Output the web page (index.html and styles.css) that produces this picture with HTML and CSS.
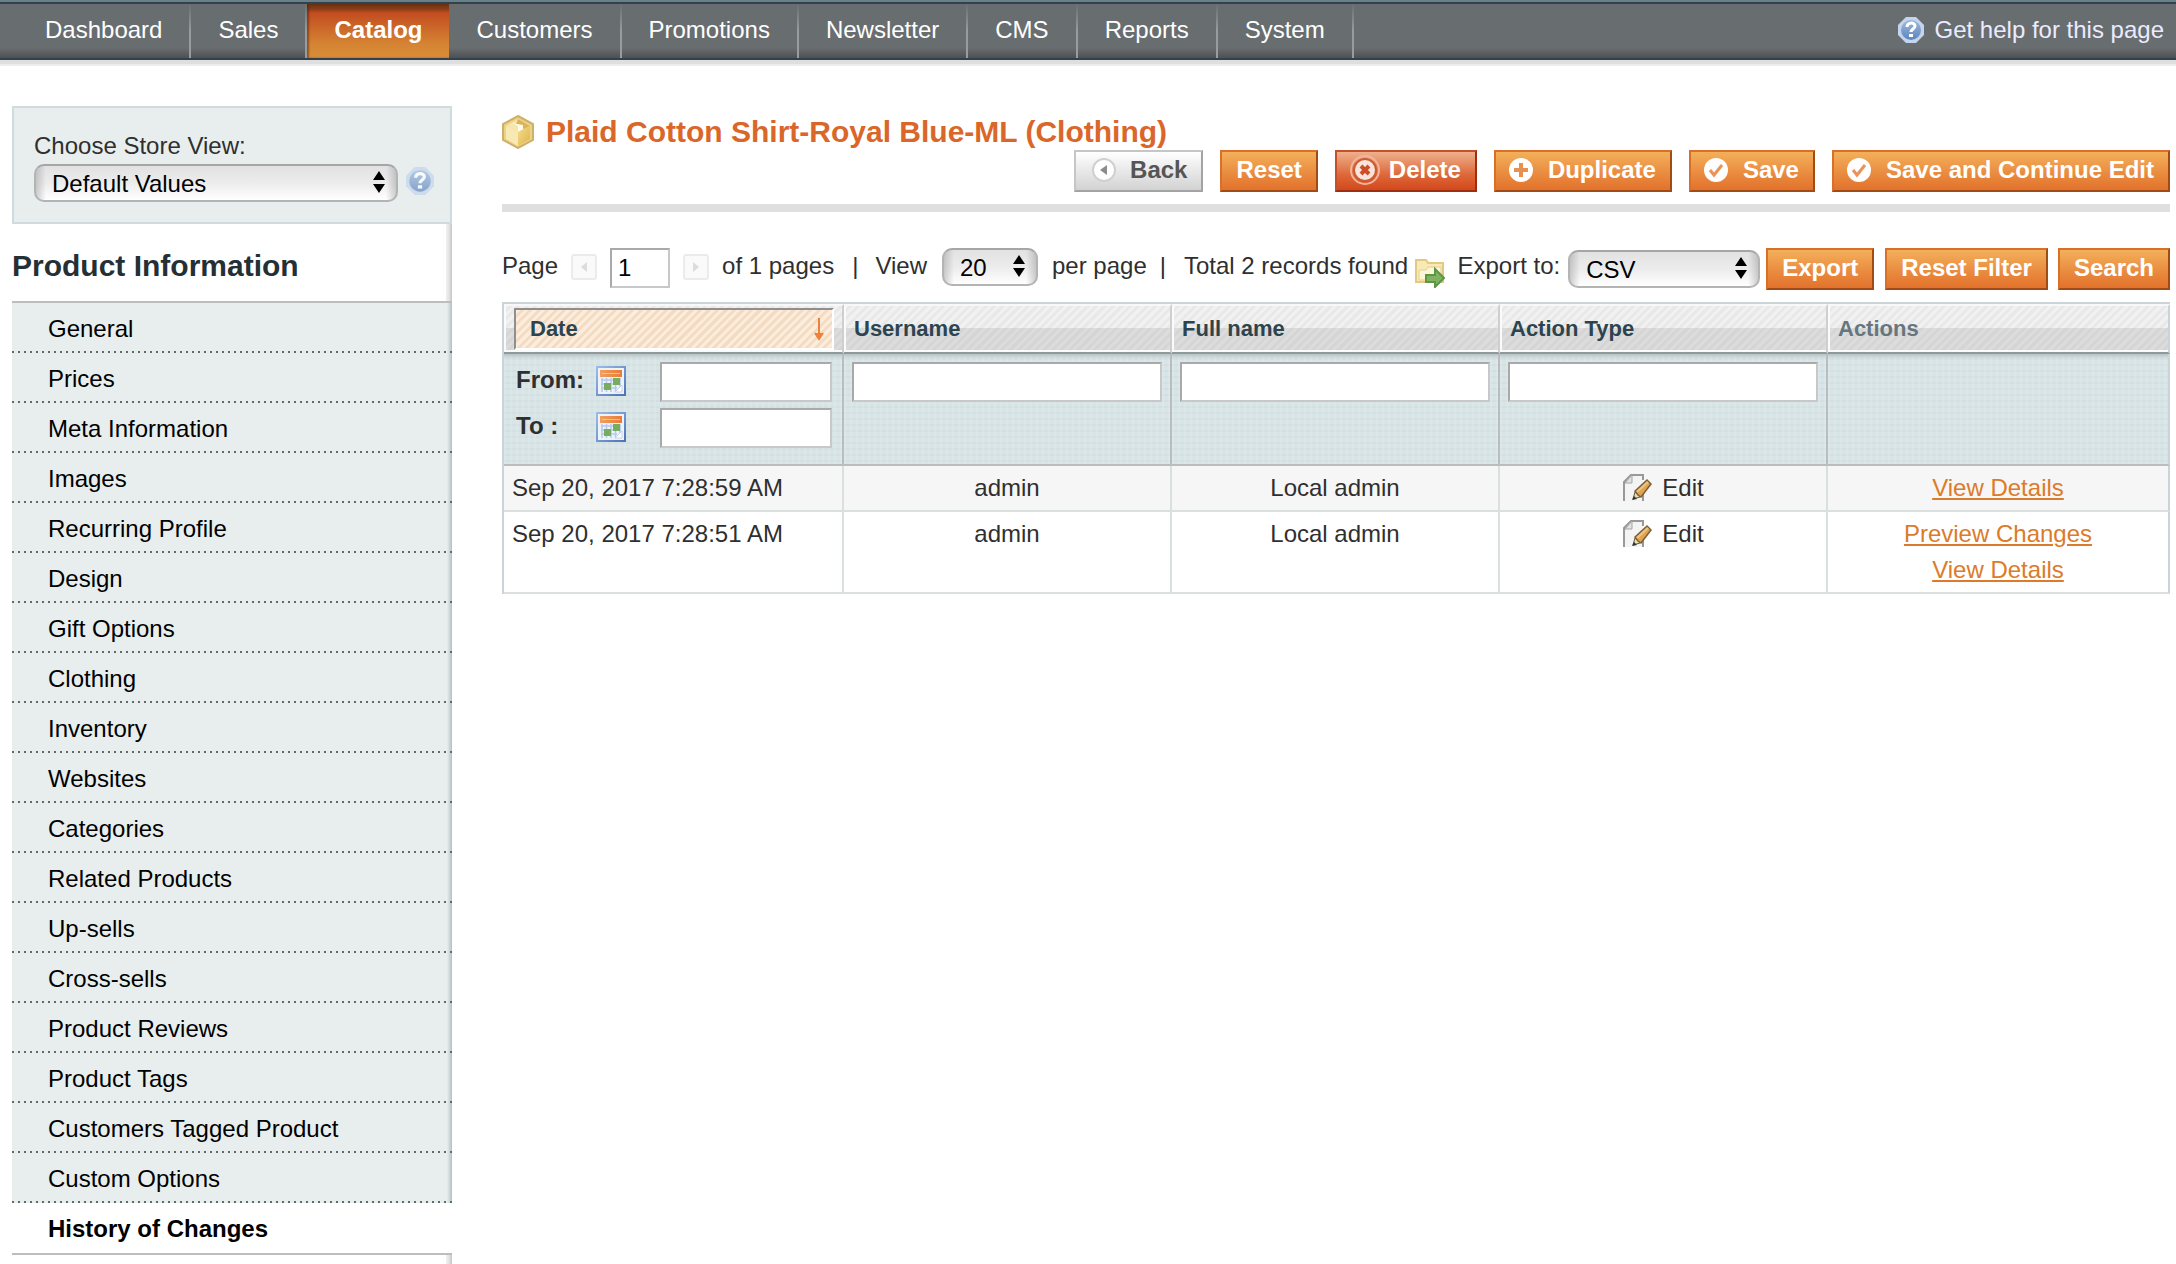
FILE: index.html
```html
<!DOCTYPE html>
<html lang="en">
<head>
<meta charset="utf-8">
<title>Plaid Cotton Shirt-Royal Blue-ML / Manage Products</title>
<link rel="stylesheet" href="styles.css">
</head>
<body>
<svg class="sprite" width="0" height="0" aria-hidden="true">
  <defs>
    <linearGradient id="helpFill" x1="0" y1="0" x2="0" y2="1"><stop offset="0" stop-color="#9db9dd"/><stop offset="1" stop-color="#5c85bd"/></linearGradient>
    <linearGradient id="goldTop" x1="0" y1="0" x2="1" y2="1"><stop offset="0" stop-color="#f6dc8c"/><stop offset="1" stop-color="#deb44c"/></linearGradient>
    <linearGradient id="calTop" x1="0" y1="0" x2="1" y2="0"><stop offset="0" stop-color="#f0a060"/><stop offset="1" stop-color="#ea7a35"/></linearGradient>
    <linearGradient id="calEdge" x1="0" y1="0" x2="1" y2="1"><stop offset="0" stop-color="#9dbbe6"/><stop offset="1" stop-color="#4d74b8"/></linearGradient>
    <symbol id="help" viewBox="0 0 28 28">
      <path d="M9 1h10l8 8v10l-8 8H9l-8-8V9z" fill="#c3d5ec"/>
      <circle cx="14" cy="14" r="10" fill="url(#helpFill)"/>
      <path d="M10 11c0-5 8-5 8-1 0 3-4 3-4 6" fill="none" stroke="#fff" stroke-width="3"/>
      <rect x="12" y="18" width="4" height="3" fill="#fff"/>
    </symbol>
    <symbol id="calendar" viewBox="0 0 30 30">
      <rect x="1" y="1" width="28" height="28" fill="#eef3fb" stroke="url(#calEdge)" stroke-width="2"/>
      <rect x="4" y="4" width="22" height="7" fill="url(#calTop)"/>
      <path d="M6 7.500h18" stroke="#f7c08e" stroke-width="1"/>
      <path d="M6 12v14M10.500 12v14M15 12v14M19.500 12v14M24 12v9M5 14h20M5 18h20M5 22h16" stroke="#b5c9ea" stroke-width="1.500"/>
      <rect x="17" y="12" width="7" height="7" fill="#76ad60"/>
      <rect x="8" y="17" width="7" height="7" fill="#76ad60"/>
      <path d="M19 26l7-7v7z" fill="#fff" stroke="#c3d2ec"/>
    </symbol>
    <symbol id="edit" viewBox="0 0 30 30">
      <path d="M2 28V9l7-7h12v26z" fill="#f4f4f4"/>
      <path d="M2 28V9l7-7h12v5M21 20v8" fill="none" stroke="#999" stroke-width="2"/>
      <path d="M3 10h7V2z" fill="#e2e2e2" stroke="#a5a5a5"/>
      <path d="M11 26l2-7 5 5z" fill="#e9dfae" stroke="#5d5638"/>
      <path d="M13 18L25 7l4 4-10 13-3-2z" fill="#dda452" stroke="#7d5f33" stroke-width="1.500"/>
      <path d="M15 19L26 9" stroke="#f0c481" stroke-width="2"/>
      <path d="M10 27l2-4 3 3z" fill="#333"/>
    </symbol>
    <symbol id="check" viewBox="0 0 26 26">
      <circle cx="13" cy="13" r="12" fill="#fff"/>
      <path d="M7 13l4 5 8-10" fill="none" stroke="#ea9258" stroke-width="3"/>
    </symbol>
  </defs>
</svg>

<header class="topbar">
  <nav class="menu">
    <a href="#">Dashboard</a>
    <a href="#">Sales</a>
    <a href="#" class="active">Catalog</a>
    <a href="#">Customers</a>
    <a href="#">Promotions</a>
    <a href="#">Newsletter</a>
    <a href="#">CMS</a>
    <a href="#">Reports</a>
    <a href="#">System</a>
  </nav>
  <a href="#" class="page-help"><svg width="28" height="28"><use href="#help"/></svg>Get help for this page</a>
</header>

<div class="page">
  <aside class="sidebar">
    <div class="switcher">
      <label for="store">Choose Store View:</label>
      <div class="switcher-row">
        <span class="select select-store"><select id="store"><option>Default Values</option></select><svg class="arrows" width="12" height="22" viewBox="0 0 12 22"><path d="M6 0l6 9H0zM0 13h12l-6 9z"/></svg></span>
        <a href="#" class="faded" aria-label="What is this?"><svg width="30" height="30"><use href="#help"/></svg></a>
      </div>
    </div>
    <h3>Product Information</h3>
    <ul class="tabs">
      <li><a href="#">General</a></li>
      <li><a href="#">Prices</a></li>
      <li><a href="#">Meta Information</a></li>
      <li><a href="#">Images</a></li>
      <li><a href="#">Recurring Profile</a></li>
      <li><a href="#">Design</a></li>
      <li><a href="#">Gift Options</a></li>
      <li><a href="#">Clothing</a></li>
      <li><a href="#">Inventory</a></li>
      <li><a href="#">Websites</a></li>
      <li><a href="#">Categories</a></li>
      <li><a href="#">Related Products</a></li>
      <li><a href="#">Up-sells</a></li>
      <li><a href="#">Cross-sells</a></li>
      <li><a href="#">Product Reviews</a></li>
      <li><a href="#">Product Tags</a></li>
      <li><a href="#">Customers Tagged Product</a></li>
      <li><a href="#">Custom Options</a></li>
      <li class="current"><a href="#">History of Changes</a></li>
    </ul>
  </aside>

  <main class="content">
    <div class="content-header">
      <h1><svg width="32" height="34" viewBox="0 0 32 34"><path d="M16 1l15 8v16l-15 8-15-8V9z" fill="#ecd384" stroke="#cdb06a" stroke-width="2"/><path d="M16 4l12 7-12 6-12-6z" fill="#f6e6ae"/><path d="M16 4l12 7-6 3-8-5z" fill="#d9b458"/><path d="M4 11l12 6v14L4 24z" fill="#f8e9b4"/><path d="M16 17l12-6v13l-12 7z" fill="url(#goldTop)"/><path d="M10 8l6 3v6l5-3V10" fill="#fffbe6"/></svg>Plaid Cotton Shirt-Royal Blue-ML (Clothing)</h1>
      <div class="actions">
        <button type="button" class="btn back"><svg width="26" height="26" viewBox="0 0 26 26"><circle cx="14" cy="13" r="11" fill="#fff" stroke="#d0d0d0" stroke-width="2"/><path d="M17 8v10l-7-5z" fill="#8b8b8b"/></svg>Back</button>
        <button type="button" class="btn">Reset</button>
        <button type="button" class="btn delete"><svg width="32" height="30" viewBox="0 0 32 30"><circle cx="16" cy="15" r="14" fill="none" stroke="#f0b59a" stroke-width="2"/><circle cx="16" cy="15" r="11" fill="#f9e3da" stroke="#cd5a33" stroke-width="2"/><path d="M12 11l8 8M20 11l-8 8" stroke="#cc4e27" stroke-width="4"/></svg>Delete</button>
        <button type="button" class="btn with-icon"><svg width="26" height="26" viewBox="0 0 26 26"><circle cx="13" cy="13" r="12" fill="#fff"/><path d="M13 6v14M6 13h14" stroke="#e8904f" stroke-width="4"/></svg>Duplicate</button>
        <button type="button" class="btn with-icon"><svg width="26" height="26"><use href="#check"/></svg>Save</button>
        <button type="button" class="btn with-icon"><svg width="26" height="26"><use href="#check"/></svg>Save and Continue Edit</button>
      </div>
    </div>

    <div class="grid-bar">
      <div class="pager">
        <label for="pageno">Page</label>
        <svg class="step" width="26" height="26" viewBox="0 0 26 26"><rect x="1" y="1" width="24" height="24" rx="2" fill="#fafafa" stroke="#ebebeb" stroke-width="2"/><path d="M16 8v10l-6-5z" fill="#dcdcdc"/></svg>
        <input id="pageno" class="field" type="text" value="1">
        <svg class="step" width="26" height="26" viewBox="0 0 26 26"><rect x="1" y="1" width="24" height="24" rx="2" fill="#fafafa" stroke="#ebebeb" stroke-width="2"/><path d="M10 8v10l6-5z" fill="#dcdcdc"/></svg>
        <span>of 1 pages</span>
        <span class="sep">|</span>
        <label for="limit">View</label>
        <span class="select select-limit"><select id="limit"><option>20</option></select><svg class="arrows" width="12" height="22" viewBox="0 0 12 22"><path d="M6 0l6 9H0zM0 13h12l-6 9z"/></svg></span>
        <span class="per">per page</span>
        <span class="bar">|</span>
        <span>Total 2 records found</span>
      </div>
      <div class="export">
        <svg class="folder" width="30" height="30" viewBox="0 0 30 30"><path d="M1 24V2h10l2 3h15v19z" fill="#f8eab5" stroke="#e2ca85" stroke-width="2"/><path d="M4 22V12h7l2-3h13v13z" fill="#fdf6d6" stroke="#e5cf8b"/><path d="M11 17h9v-6l9 9-9 9v-5h-9z" fill="#7fb261" stroke="#5f9646" stroke-width="2"/></svg>
        <label for="format">Export to:</label>
        <span class="select select-format"><select id="format"><option>CSV</option></select><svg class="arrows" width="12" height="22" viewBox="0 0 12 22"><path d="M6 0l6 9H0zM0 13h12l-6 9z"/></svg></span>
        <button type="button" class="btn">Export</button>
        <button type="button" class="btn filter-reset">Reset Filter</button>
        <button type="button" class="btn">Search</button>
      </div>
    </div>

    <table class="grid">
      <colgroup><col class="col-date"><col><col><col><col class="col-actions"></colgroup>
      <thead>
        <tr class="headings">
          <th class="sorted"><a href="#">Date<svg width="10" height="24" viewBox="0 0 10 24"><path d="M5 0v20M1 15l4 6 4-6" fill="none" stroke="#f08038" stroke-width="2"/><path d="M1 15h8l-4 7z" fill="#f08038"/></svg></a></th>
          <th><a href="#">Username</a></th>
          <th><a href="#">Full name</a></th>
          <th><a href="#">Action Type</a></th>
          <th class="plain">Actions</th>
        </tr>
        <tr class="filters">
          <td class="range">
            <div class="range-line"><label for="from">From:</label><svg width="30" height="30"><use href="#calendar"/></svg><input id="from" class="field" type="text"></div>
            <div class="range-line"><label for="to">To :</label><svg width="30" height="30"><use href="#calendar"/></svg><input id="to" class="field" type="text"></div>
          </td>
          <td><input class="field" type="text" aria-label="Username"></td>
          <td><input class="field" type="text" aria-label="Full name"></td>
          <td><input class="field" type="text" aria-label="Action Type"></td>
          <td></td>
        </tr>
      </thead>
      <tbody>
        <tr>
          <td class="date">Sep 20, 2017 7:28:59 AM</td>
          <td>admin</td>
          <td>Local admin</td>
          <td><span class="kind"><svg width="30" height="30"><use href="#edit"/></svg>Edit</span></td>
          <td><a href="#">View Details</a></td>
        </tr>
        <tr>
          <td class="date">Sep 20, 2017 7:28:51 AM</td>
          <td>admin</td>
          <td>Local admin</td>
          <td><span class="kind"><svg width="30" height="30"><use href="#edit"/></svg>Edit</span></td>
          <td><a href="#">Preview Changes</a><br><a href="#">View Details</a></td>
        </tr>
      </tbody>
    </table>
  </main>
</div>
</body>
</html>
```
FILE: styles.css
```css
* { box-sizing: border-box; }

body {
  margin: 0;
  background: #fff;
  color: #2f2f2f;
  font: 24px/36px "Liberation Sans", Arial, Helvetica, sans-serif;
}

svg { display: block; flex: none; }
.sprite { position: absolute; }
button, input, select { font: inherit; margin: 0; }

/* Top menu */
.topbar {
  display: flex;
  justify-content: space-between;
  height: 60px;
  padding: 2px 0 0 18px;
  background: linear-gradient(#688088 0 2px, #33414e 2px 4px, #686d70 4px 48px, #4c5052 58px, #33414e 58px);
  box-shadow: 0 4px 0 #dfdfdf, 0 6px 0 #ececec;
}
.menu { display: flex; padding: 2px 0; }
.menu a {
  height: 54px;
  padding: 0 27px;
  border-right: 2px solid;
  border-image: linear-gradient(#686d70, #999c9e 50%) 1;
  border-width: 0 2px 0 0;
  color: #fff;
  line-height: 52px;
  text-decoration: none;
}
.menu .active {
  border: 0;
  background: linear-gradient(#6b3413, #8a3d18 5px, #c34d20 9px, #d58433 40px, #d98e38);
  box-shadow: inset 2px 0 2px rgba(80, 30, 10, .5);
  font-weight: bold;
}
.page-help {
  display: flex;
  align-items: center;
  gap: 10px;
  padding: 0 12px 2px 0;
  color: #ebebff;
  text-decoration: none;
}

.page {
  display: flex;
  gap: 50px;
  padding: 46px 6px 0 12px;
}

/* Left column */
.sidebar {
  flex: none;
  width: 440px;
  padding-bottom: 60px;
  background: linear-gradient(to left, #c4c4c4, #e4e4e4 3px, #f0f0f0 6px, transparent 6px);
}
.switcher {
  height: 118px;
  padding: 20px 14px 0 20px;
  border: 2px solid #d0dbdf;
  background: #e8eeee;
}
.switcher label { display: block; }
.switcher-row { display: flex; gap: 7px; }
.faded { padding-top: 2px; opacity: .7; }

.select {
  position: relative;
  display: block;
  height: 38px;
}
.select select {
  appearance: none;
  display: block;
  width: 100%;
  height: 100%;
  padding: 0 0 4px 16px;
  border: 2px solid #b4b4b4;
  border-top-color: #a6a6a6;
  border-radius: 10px;
  background: linear-gradient(to right, rgba(150, 150, 150, .45), transparent 10px calc(100% - 10px), rgba(150, 150, 150, .45)), linear-gradient(#e2e2e2, #ececec 50%, #fff);
  color: #000;
}
.arrows {
  position: absolute;
  right: 13px;
  top: 7px;
  pointer-events: none;
}
.select-store { width: 364px; }
.select-limit { width: 96px; }
.select-format { width: 192px; }

.sidebar h3 {
  margin: 0;
  padding: 24px 0 17px;
  color: #253035;
  font-size: 30px;
  line-height: 36px;
}
.tabs {
  margin: 0;
  padding: 0;
  border: solid #bdbdbd;
  border-width: 2px 0;
  list-style: none;
}
.tabs li {
  height: 50px;
  background:
    repeating-linear-gradient(to right, #5f6b6b 0 2px, transparent 2px 6px) left bottom / 100% 2px no-repeat,
    linear-gradient(to left, #b3c0c0, #d4dcdc 3px, #e8eeee 5px);
}
.tabs a {
  display: block;
  padding: 8px 0 6px 36px;
  color: #000;
  text-decoration: none;
}
.tabs .current { background: #fff; font-weight: bold; }

/* Content */
.content { flex: 1; min-width: 0; }
.content-header { border-bottom: 8px solid #dfdfdf; }
.content-header h1 {
  display: flex;
  align-items: center;
  gap: 12px;
  margin: 0;
  padding-top: 8px;
  color: #da6629;
  font-size: 30px;
  line-height: 36px;
}
.actions {
  display: flex;
  justify-content: flex-end;
  gap: 17px;
  padding-bottom: 12px;
}
.btn {
  display: flex;
  align-items: center;
  height: 42px;
  padding: 0 14px 2px;
  border: 2px solid;
  border-color: #d8702a #a04c18 #a04c18 #d8702a;
  background: linear-gradient(#f3b05b, #e9893e 60%, #e2722c);
  color: #fff;
  font-weight: bold;
  white-space: nowrap;
}
.with-icon { gap: 14px; padding-left: 12px; }
.back {
  gap: 14px;
  border-color: #c6c6c6 #a3a3a3 #a3a3a3 #c6c6c6;
  background: linear-gradient(#fff, #d2d2d2);
  color: #555;
}
.delete {
  gap: 8px;
  padding-left: 12px;
  border-color: #c5512a #9c2f12 #9c2f12 #c5512a;
  background: linear-gradient(#efb08c, #dd6839 60%, #d3481d);
}

.grid-bar {
  display: flex;
  justify-content: space-between;
  padding: 36px 0 12px;
}
.pager, .export { display: flex; align-items: flex-start; white-space: nowrap; }
.pager > *, .export > * { flex: none; }
.pager .step { margin: 6px 13px 0; }
.field {
  display: block;
  width: 100%;
  height: 40px;
  padding: 0 6px;
  border: 2px solid;
  border-color: #a9a9a9 #c8c8c8 #c8c8c8 #a9a9a9;
  background: #fff;
  color: #000;
}
.pager .field { width: 60px; }
.sep { padding: 0 17px 0 18px; }
.select-limit { margin: 0 14px 0 15px; }
.bar { padding: 0 18px 0 13px; }
.folder { margin: 10px 12px 0 0; }
.select-format { margin: 2px 6px 0 8px; }
.filter-reset { margin: 0 10px 0 11px; }

/* Records */
.grid {
  width: 100%;
  table-layout: fixed;
  border-collapse: separate;
  border-spacing: 0;
  border: 2px solid #ccd3d6;
  border-width: 2px 0 0 2px;
}
.col-date { width: 340px; }
.col-actions { width: 342px; }
.grid th, .grid td { padding: 0; vertical-align: top; }
.headings th {
  height: 50px;
  border: solid;
  border-width: 2px 2px 2px 0;
  border-color: #f8f8f8 #cfcfcf #8f9a98 #fff;
  background:
    repeating-linear-gradient(135deg, transparent 0 3px, rgba(120, 120, 120, .07) 3px 6px),
    linear-gradient(#f1f1f1 22px, #dcdcdc 22px);
  box-shadow: inset 2px -2px 0 #fafafa;
  font-size: 22px;
  line-height: 28px;
  text-align: left;
}
.headings th, .headings a { color: #2d444f; text-decoration: none; }
.headings th:not(.sorted) { padding: 9px 10px 0; }
.headings .plain { color: #67767e; }
.headings .sorted { padding: 2px 8px 0 10px; }
.sorted a {
  display: flex;
  justify-content: space-between;
  height: 42px;
  padding: 5px 8px 0 14px;
  border: 2px solid;
  border-color: #8f8f8f #fff #fff #8f8f8f;
  background: repeating-linear-gradient(135deg, #fbecdb 0 3px, #f3dcc3 3px 6px);
}
.sorted svg { margin-top: 3px; }
.filters td {
  height: 112px;
  padding: 8px;
  border: solid #b9bdbd;
  border-width: 0 2px 2px 0;
  background:
    linear-gradient(#b6c2c3, transparent 5px),
    repeating-linear-gradient(to right, rgba(255, 255, 255, .12) 0 2px, transparent 2px 6px),
    repeating-linear-gradient(#d8e4e6 0 4px, #d3e0e2 4px 6px);
}
.filters .range { padding: 8px 10px 0 12px; }
.range-line { display: flex; height: 46px; font-weight: bold; }
.range-line label { width: 80px; }
.range-line svg { margin-top: 4px; }
.range-line .field { width: 172px; margin-left: auto; }
.grid tbody td {
  padding: 4px 6px;
  border: solid #dadfe0;
  border-width: 0 2px 2px 0;
  text-align: center;
}
.grid tbody tr:first-child td { background: #f6f6f6; }
.grid tbody .date { padding-left: 8px; text-align: left; }
.grid tr > :last-child { border-right-color: #ccd3d6; }
.grid tbody a { color: #dc7b29; }
.kind { display: flex; justify-content: center; align-items: center; gap: 10px; height: 36px; }
```
